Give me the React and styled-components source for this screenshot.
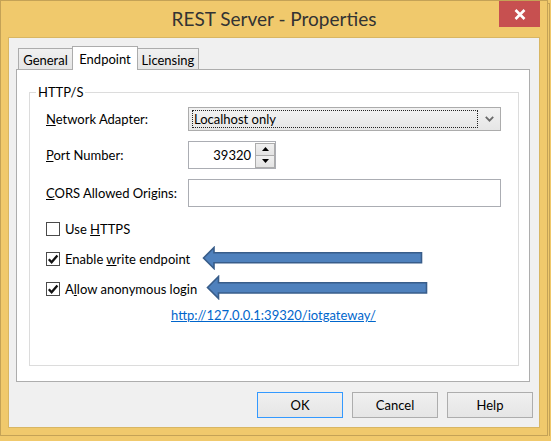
import React from "react";
import styled, { createGlobalStyle } from "styled-components";

const GlobalStyle = createGlobalStyle`
  html, body { margin: 0; padding: 0; background: #F0C96C; }
  body { font-family: Lato, "Noto Sans", sans-serif; font-size: 13px; color: #000; }
  * { box-sizing: border-box; }
`;

const Window = styled.div`
  position: relative;
  width: 548px;
  height: 436px;
  border: 1px solid #C4A256;
  background: #F0C96C;
  display: flex;
  flex-direction: column;
  box-shadow: 2px 3px 0 -1px #F0C96C, 2px 3px 0 0 #C4A256;
`;

const TitleBar = styled.div`
  height: 36px;
  flex: none;
  display: grid;
  grid-template-columns: 1fr auto 1fr;
  align-items: start;
`;

const Title = styled.div`
  grid-column: 2;
  font-family: Lato, "Noto Sans", sans-serif;
  font-size: 19px;
  line-height: 20px;
  letter-spacing: 0;
  color: #333;
  padding-top: 8px;
`;

const CloseButton = styled.div`
  grid-column: 3;
  justify-self: end;
  width: 41px;
  height: 26px;
  margin-right: 7px;
  background: #C75050;
  display: flex;
  align-items: center;
  justify-content: center;
`;

const Client = styled.div`
  flex: 1;
  margin: 0 7px 7px;
  border: 1px solid #D8B663;
  background: #F0F0F0;
  padding: 8px 6px 0 7px;
  display: flex;
  flex-direction: column;
`;

const TabStrip = styled.div`
  display: flex;
  align-items: flex-end;
  height: 23px;
  padding-left: 2px;
  position: relative;
  z-index: 1;
`;

const Tab = styled.div`
  width: ${(p) => p.$w}px;
  height: ${(p) => (p.$active ? 24 : 21)}px;
  margin-bottom: ${(p) => (p.$active ? -1 : 0)}px;
  margin-left: ${(p) => (p.$first ? 0 : -1)}px;
  border: 1px solid #ACACAC;
  border-bottom: none;
  background: ${(p) => (p.$active ? "#fff" : "linear-gradient(#F0F0F0, #E5E5E5)")};
  position: relative;
  z-index: ${(p) => (p.$active ? 2 : 1)};
  display: flex;
  align-items: center;
  justify-content: center;
  padding-top: ${(p) => (p.$active ? 0 : 2)}px;
  line-height: 16px;
`;

const Panel = styled.div`
  height: 313px;
  flex: none;
  margin-right: 3px;
  border: 1px solid #ADADAD;
  background: #fff;
  padding: 0 10px 15px 12px;
  display: flex;
  flex-direction: column;
`;

const Group = styled.fieldset`
  flex: 1;
  margin: 14px 0 0 0;
  border: 1px solid #DCDCDC;
  padding: 0 0 0 6px;
  min-width: 0;
`;

const Caption = styled.legend`
  padding: 0 2px;
  line-height: 16px;
`;

const GroupBody = styled.div`
  padding: 7px 0 0 10px;
  display: flex;
  flex-direction: column;
`;

const FieldList = styled.div`
  display: flex;
  flex-direction: column;
  gap: 10px;
`;

const FieldRow = styled.div`
  display: flex;
  align-items: center;
`;

const FieldLabel = styled.div`
  width: 142px;
  line-height: 16px;
`;

const SelectBox = styled.div`
  width: 313px;
  height: 24px;
  border: 1px solid #ACACAC;
  background: linear-gradient(#F2F2F2, #E6E6E6);
  display: flex;
  align-items: center;
  padding: 0 6px 0 3px;
`;

const FocusRect = styled.div`
  width: 286px;
  height: 18px;
  border: 1px dotted #222;
  line-height: 16px;
  padding-left: 1px;
`;

const Chevron = styled.svg`
  margin-left: auto;
`;

const TextBox = styled.div`
  width: ${(p) => p.$w}px;
  height: 28px;
  border: 1px solid #ABADB3;
  background: #fff;
  display: flex;
  align-items: center;
`;

const NumberText = styled.div`
  flex: 1;
  text-align: right;
  padding-right: 4px;
  line-height: 16px;
`;

const Spinner = styled.div`
  width: 20px;
  height: 25px;
  display: flex;
  flex-direction: column;
`;

const SpinButton = styled.div`
  flex: 1;
  border: 1px solid #ACACAC;
  margin-top: ${(p) => (p.$down ? -1 : 0)}px;
  background: linear-gradient(#F0F0F0, #E3E3E3);
  display: flex;
  align-items: center;
  justify-content: center;
`;

const CheckList = styled.div`
  margin-top: 15px;
  display: flex;
  flex-direction: column;
  gap: 16px;
`;

const CheckRow = styled.div`
  display: flex;
  align-items: center;
  height: 14px;
  gap: 5px;
`;

const Box = styled.div`
  width: 14px;
  height: 14px;
  border: 1px solid #4A4A4A;
  background: #fff;
  display: flex;
  align-items: center;
  justify-content: center;
`;

const CheckText = styled.span`
  line-height: 16px;
`;

const Link = styled.a`
  margin: 11px 0 0 125px;
  color: #0066CC;
  text-decoration: underline;
  line-height: 16px;
`;

const ButtonRow = styled.div`
  display: flex;
  justify-content: flex-end;
  gap: 9px;
  margin-top: 10px;
`;

const Button = styled.div`
  width: 86px;
  height: 26px;
  border: 1px solid ${(p) => (p.$default ? "#3399FF" : "#ADADAD")};
  background: linear-gradient(#F0F0F0, #E5E5E5);
  display: flex;
  align-items: center;
  justify-content: center;
  line-height: 16px;
`;

const Arrow = styled.svg`
  position: absolute;
  left: ${(p) => p.$x}px;
  top: ${(p) => p.$y}px;
`;

const Check = () => (
  <svg width="12" height="12" viewBox="0 0 12 12">
    <path d="M1.8 6.2 L4.6 9.2 L10.4 2.4" fill="none" stroke="#111" strokeWidth="2.3" />
  </svg>
);

const Checkbox = ({ checked, children }) => (
  <CheckRow>
    <Box>{checked && <Check />}</Box>
    <CheckText>{children}</CheckText>
  </CheckRow>
);

export default function App() {
  return (
    <>
      <GlobalStyle />
      <Window>
        <TitleBar>
          <Title>REST Server - Properties</Title>
          <CloseButton>
            <svg width="12" height="11" viewBox="0 0 12 11">
              <path d="M1.5 1 L10.5 10 M10.5 1 L1.5 10" stroke="#fff" strokeWidth="2.6" />
            </svg>
          </CloseButton>
        </TitleBar>
        <Client>
          <TabStrip>
            <Tab $w={55} $first>General</Tab>
            <Tab $w={66} $active>Endpoint</Tab>
            <Tab $w={62}>Licensing</Tab>
          </TabStrip>
          <Panel>
            <Group>
              <Caption>HTTP/S</Caption>
              <GroupBody>
                <FieldList>
                  <FieldRow>
                    <FieldLabel><u>N</u>etwork Adapter:</FieldLabel>
                    <SelectBox>
                      <FocusRect>Localhost only</FocusRect>
                      <Chevron width="9" height="6" viewBox="0 0 9 6">
                        <path d="M0.8 0.8 L4.5 4.6 L8.2 0.8" fill="none" stroke="#6A6A6A" strokeWidth="1.8" />
                      </Chevron>
                    </SelectBox>
                  </FieldRow>
                  <FieldRow>
                    <FieldLabel><u>P</u>ort Number:</FieldLabel>
                    <TextBox $w={88}>
                      <NumberText>39320</NumberText>
                      <Spinner>
                        <SpinButton>
                          <svg width="7" height="4" viewBox="0 0 7 4"><path d="M0 4 L3.5 0 L7 4 Z" fill="#000" /></svg>
                        </SpinButton>
                        <SpinButton $down>
                          <svg width="7" height="4" viewBox="0 0 7 4"><path d="M0 0 L3.5 4 L7 0 Z" fill="#000" /></svg>
                        </SpinButton>
                      </Spinner>
                    </TextBox>
                  </FieldRow>
                  <FieldRow>
                    <FieldLabel><u>C</u>ORS Allowed Origins:</FieldLabel>
                    <TextBox $w={313} />
                  </FieldRow>
                </FieldList>
                <CheckList>
                  <Checkbox>Use <u>H</u>TTPS</Checkbox>
                  <Checkbox checked>Enable <u>w</u>rite endpoint</Checkbox>
                  <Checkbox checked>A<u>l</u>low anonymous login</Checkbox>
                </CheckList>
                <Link href="#">http://127.0.0.1:39320/iotgateway/</Link>
              </GroupBody>
            </Group>
          </Panel>
          <ButtonRow>
            <Button $default>OK</Button>
            <Button>Cancel</Button>
            <Button>Help</Button>
          </ButtonRow>
        </Client>
        <Arrow $x={201} $y={245} width="222" height="24" viewBox="0 0 222 24">
          <path d="M1.5 12 L12 1.5 L12 6.8 L219.5 6.8 L219.5 16.8 L12 16.8 L12 22.5 Z" fill="#4F81BD" stroke="#385D8A" strokeWidth="1.6" />
        </Arrow>
        <Arrow $x={205} $y={274} width="223" height="25" viewBox="0 0 223 25">
          <path d="M1.5 12.5 L12.5 1.5 L12.5 7.8 L220.5 7.8 L220.5 18 L12.5 18 L12.5 23.5 Z" fill="#4F81BD" stroke="#385D8A" strokeWidth="1.6" />
        </Arrow>
      </Window>
    </>
  );
}
